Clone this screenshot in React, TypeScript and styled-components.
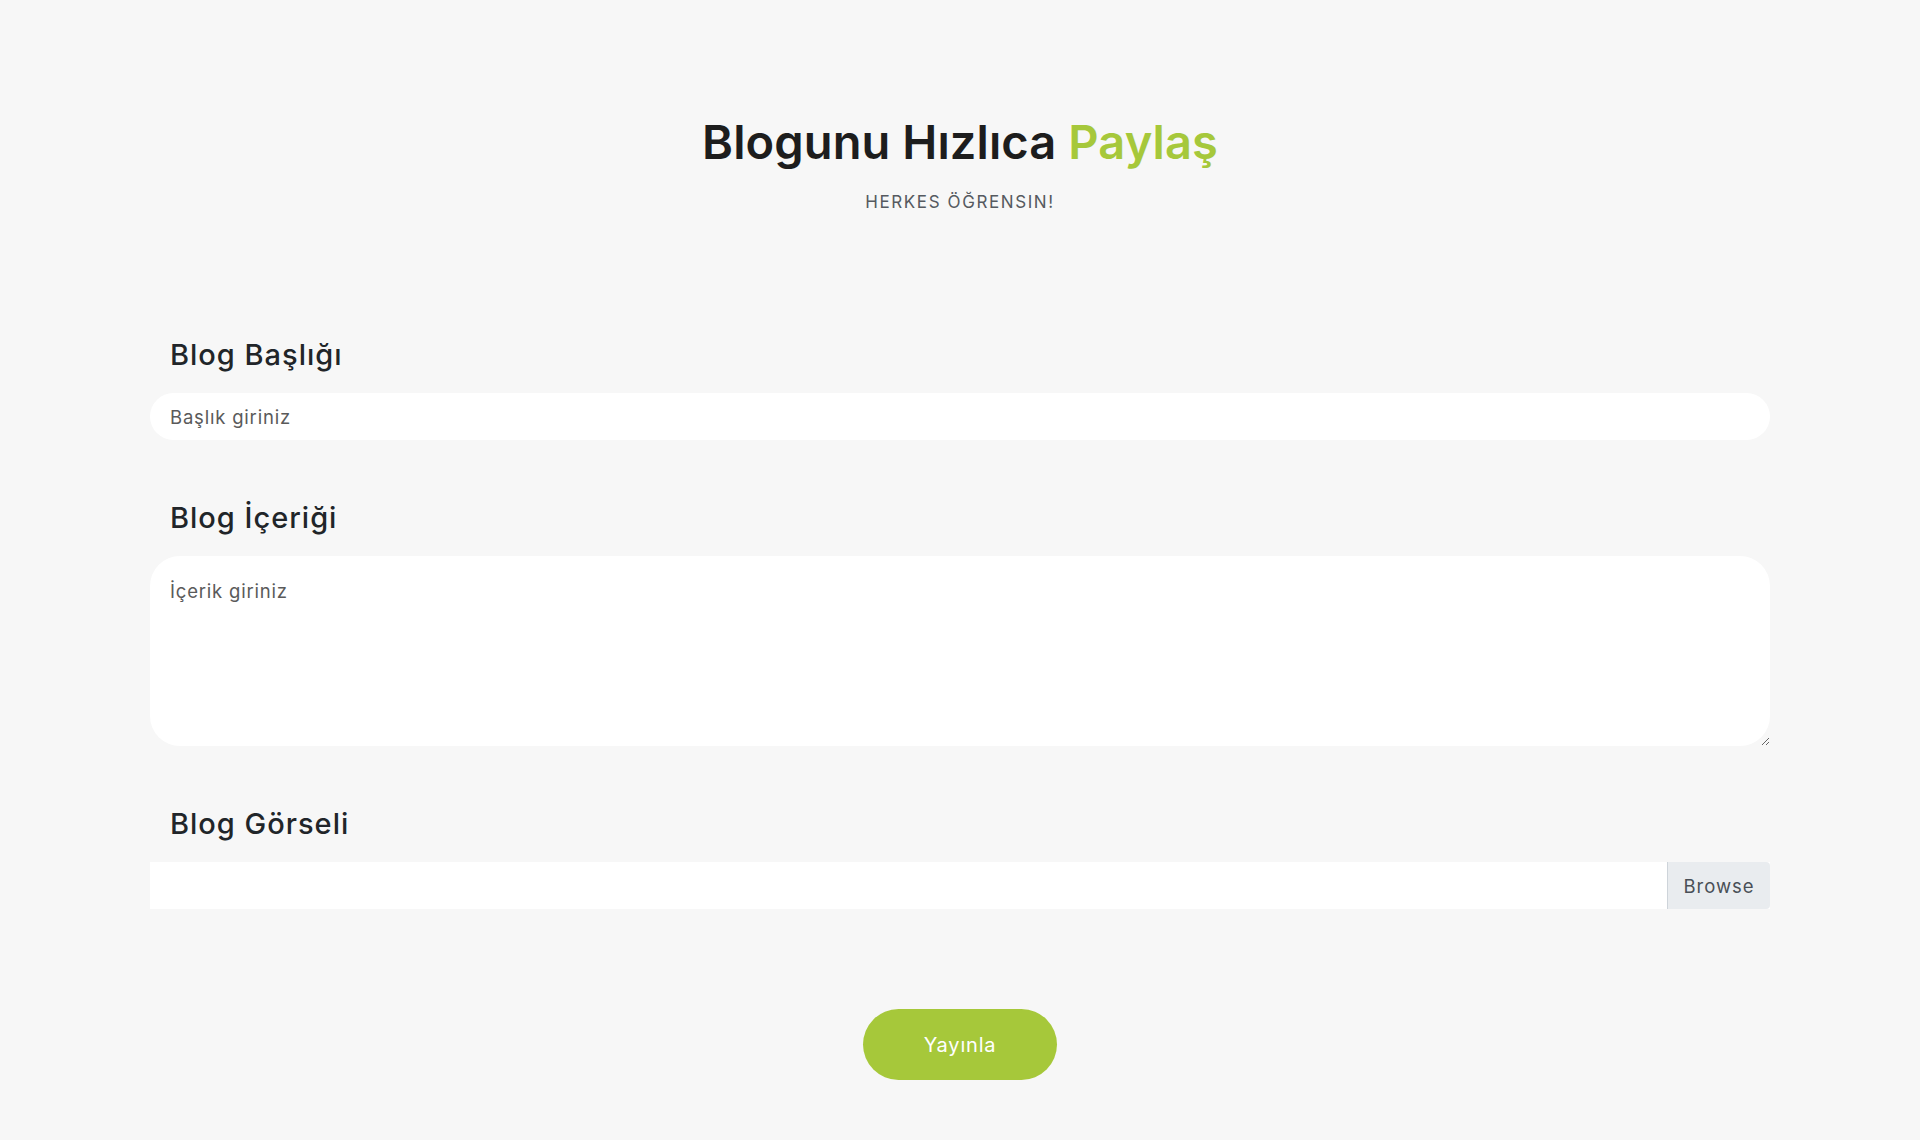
import React from "react";
import styled, { createGlobalStyle } from "styled-components";

const Global = createGlobalStyle`
  html, body { margin: 0; padding: 0; background: #f7f7f7; }
  body { font-family: "Inter", "Open Sans", sans-serif; }
  * { box-sizing: border-box; }
`;

const Page = styled.main`
  min-height: 1140px;
  background: #f7f7f7;
  padding-top: 113px;
`;

const Header = styled.header`
  display: flex;
  flex-direction: column;
  align-items: center;
`;

const Title = styled.h1`
  margin: 0;
  font-size: 47px;
  line-height: 58px;
  font-weight: 600;
  color: #1d1d1d;
  letter-spacing: 0.1px;
`;

const Accent = styled.span`
  color: #a6c83b;
`;

const Subtitle = styled.p`
  margin: 20px 0 0;
  font-size: 17px;
  line-height: 22px;
  color: #555a60;
  letter-spacing: 1.6px;
  font-weight: 400;
`;

const Form = styled.form`
  width: 1620px;
  margin: 125px auto 0;
  display: flex;
  flex-direction: column;
`;

const Field = styled.div<{ $gap?: number }>`
  display: flex;
  flex-direction: column;
  margin-top: ${(p) => p.$gap ?? 0}px;
`;

const Label = styled.label`
  font-size: 29px;
  line-height: 34px;
  font-weight: 500;
  color: #212529;
  letter-spacing: 1px;
  padding-left: 20px;
  margin-bottom: 21px;
`;

const TextInput = styled.input`
  height: 47px;
  border: none;
  border-radius: 24px;
  background: #fff;
  padding: 0 20px;
  font-family: inherit;
  font-size: 18.5px;
  letter-spacing: 0.8px;
  color: #333;
  outline: none;
  &::placeholder { color: #5a5a5a; }
`;

const TextArea = styled.textarea`
  height: 190px;
  border: none;
  border-radius: 30px;
  background: #fff;
  padding: 22px 20px;
  font-family: inherit;
  font-size: 18.5px;
  letter-spacing: 0.8px;
  line-height: 26px;
  color: #333;
  outline: none;
  resize: vertical;
  &::placeholder { color: #5a5a5a; }
`;

const FileBox = styled.label`
  height: 47px;
  display: flex;
  background: #fff;
  cursor: pointer;
`;

const FileName = styled.span`
  flex: 1;
`;

const HiddenFile = styled.input`
  display: none;
`;

const BrowseButton = styled.span`
  width: 103px;
  display: flex;
  align-items: center;
  justify-content: center;
  background: #e9ecef;
  border-left: 1px solid #ced4da;
  border-radius: 0 4px 4px 0;
  color: #495057;
  font-size: 18.5px;
  letter-spacing: 1px;
`;

const Actions = styled.div`
  display: flex;
  justify-content: center;
  margin-top: 100px;
`;

const Publish = styled.button`
  width: 194px;
  height: 71px;
  border: none;
  border-radius: 36px;
  background: #a6c83a;
  color: #fff;
  font-family: inherit;
  font-size: 20px;
  letter-spacing: 0.8px;
  font-weight: 400;
  cursor: pointer;
`;

export default function App() {
  return (
    <Page>
      <Global />
      <Header>
        <Title>
          Blogunu Hızlıca <Accent>Paylaş</Accent>
        </Title>
        <Subtitle>HERKES ÖĞRENSIN!</Subtitle>
      </Header>
      <Form onSubmit={(e) => e.preventDefault()}>
        <Field>
          <Label htmlFor="title">Blog Başlığı</Label>
          <TextInput id="title" placeholder="Başlık giriniz" />
        </Field>
        <Field $gap={61}>
          <Label htmlFor="content">Blog İçeriği</Label>
          <TextArea id="content" placeholder="İçerik giriniz" />
        </Field>
        <Field $gap={61}>
          <Label htmlFor="image">Blog Görseli</Label>
          <FileBox>
            <HiddenFile id="image" type="file" />
            <FileName />
            <BrowseButton>Browse</BrowseButton>
          </FileBox>
        </Field>
        <Actions>
          <Publish type="submit">Yayınla</Publish>
        </Actions>
      </Form>
    </Page>
  );
}
